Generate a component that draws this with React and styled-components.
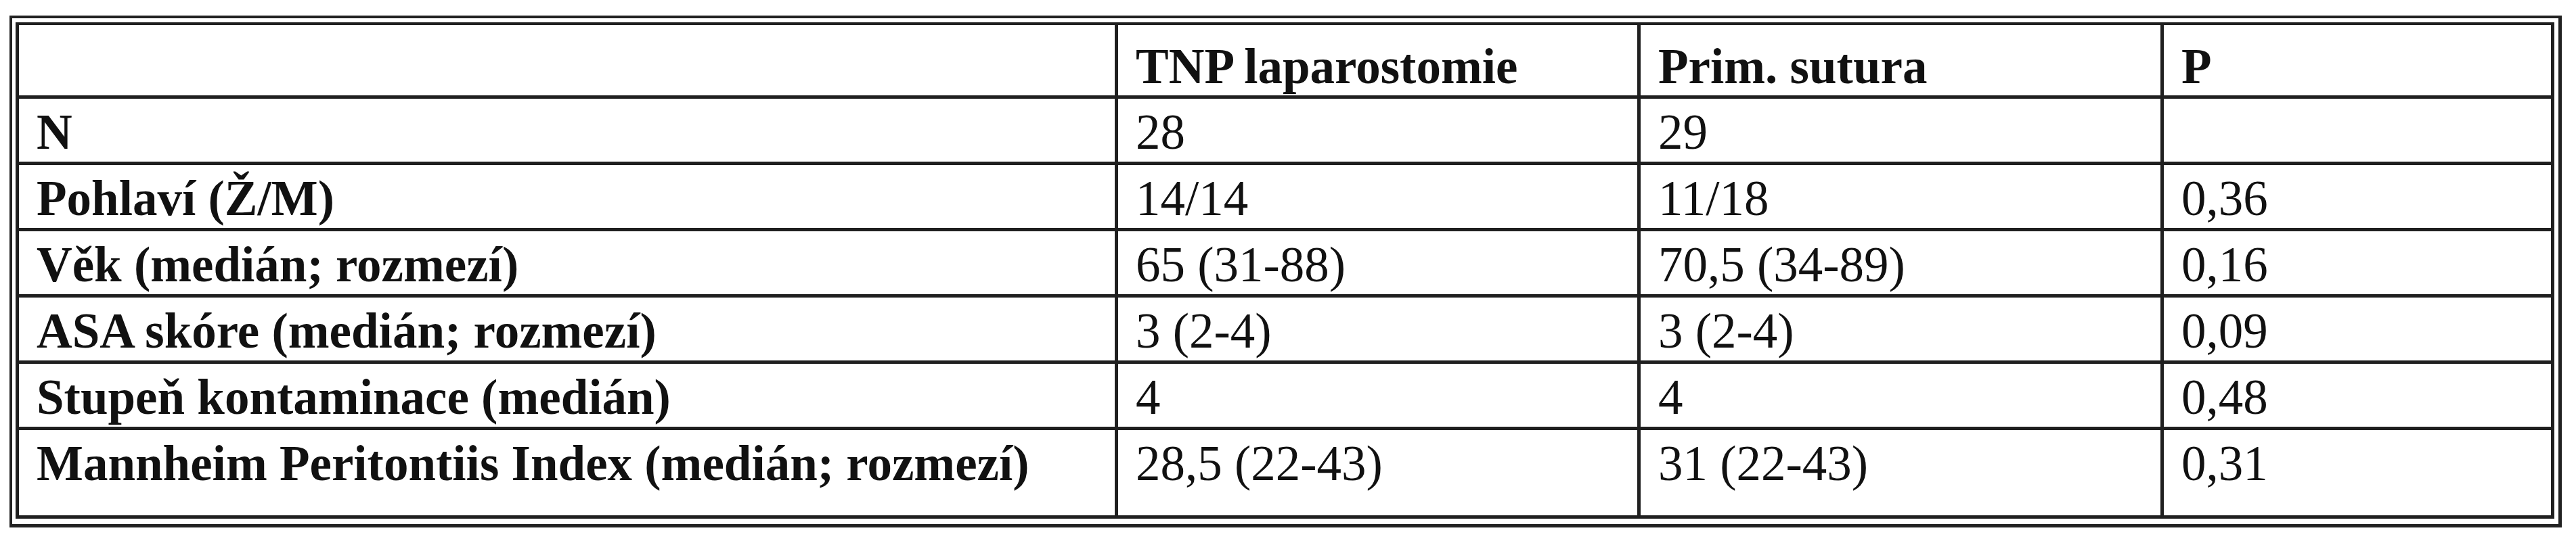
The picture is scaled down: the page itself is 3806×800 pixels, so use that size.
import React from 'react';
import styled, { createGlobalStyle } from 'styled-components';

const GlobalStyle = createGlobalStyle`
    html, body {
        margin: 0;
        padding: 0;
        background: #ffffff;
    }
`;

const Frame = styled.div`
    display: inline-block;
    margin: 23px 0 0 14px;
    padding: 6px 6px 8px 5px;
    border: 4px solid #222;
    border-width: 4px 5px 5px 4px;
    background: #fff;
`;

const Table = styled.table`
    border-collapse: collapse;
    table-layout: fixed;
    width: 3750px;
    font-family: 'Liberation Serif', 'Times New Roman', serif;
    font-size: 73px;
    line-height: 84px;
    color: #111;
`;

const HeadCell = styled.th`
    box-sizing: border-box;
    height: ${props => props.$height}px;
    padding: 20px 0 0 26px;
    border: solid #1f1f1f;
    border-width: 4px 5px 5px 5px;
    text-align: left;
    vertical-align: top;
    font-weight: 700;
    white-space: nowrap;
`;

const Cell = styled.td`
    box-sizing: border-box;
    height: ${props => props.$height}px;
    padding: 8px 0 0 26px;
    border: solid #1f1f1f;
    border-width: 5px 5px 5px 5px;
    text-align: left;
    vertical-align: top;
    font-weight: ${props => (props.$label ? 700 : 400)};
    white-space: nowrap;
`;

const columns = [1624, 772, 773, 577];

const rows = [
    ['N', '28', '29', ''],
    ['Pohlaví (Ž/M)', '14/14', '11/18', '0,36'],
    ['Věk (medián; rozmezí)', '65 (31-88)', '70,5 (34-89)', '0,16'],
    ['ASA skóre (medián; rozmezí)', '3 (2-4)', '3 (2-4)', '0,09'],
    ['Stupeň kontaminace (medián)', '4', '4', '0,48'],
    ['Mannheim Peritontiis Index (medián; rozmezí)', '28,5 (22-43)', '31 (22-43)', '0,31'],
];

const App = () => {
    return (
        <>
            <GlobalStyle />
            <Frame>
                <Table>
                    <colgroup>
                        {columns.map((w, i) => (
                            <col key={i} style={{ width: w }} />
                        ))}
                    </colgroup>
                    <thead>
                        <tr>
                            <HeadCell $height={105}></HeadCell>
                            <HeadCell $height={105}>TNP laparostomie</HeadCell>
                            <HeadCell $height={105}>Prim. sutura</HeadCell>
                            <HeadCell $height={105}>P</HeadCell>
                        </tr>
                    </thead>
                    <tbody>
                        {rows.map((row, index) => (
                            <tr key={row[0]}>
                                {row.map((value, col) => (
                                    <Cell
                                        key={col}
                                        $label={col === 0}
                                        $height={index === rows.length - 1 ? 131 : 98}
                                    >
                                        {value}
                                    </Cell>
                                ))}
                            </tr>
                        ))}
                    </tbody>
                </Table>
            </Frame>
        </>
    );
};

export default App;
